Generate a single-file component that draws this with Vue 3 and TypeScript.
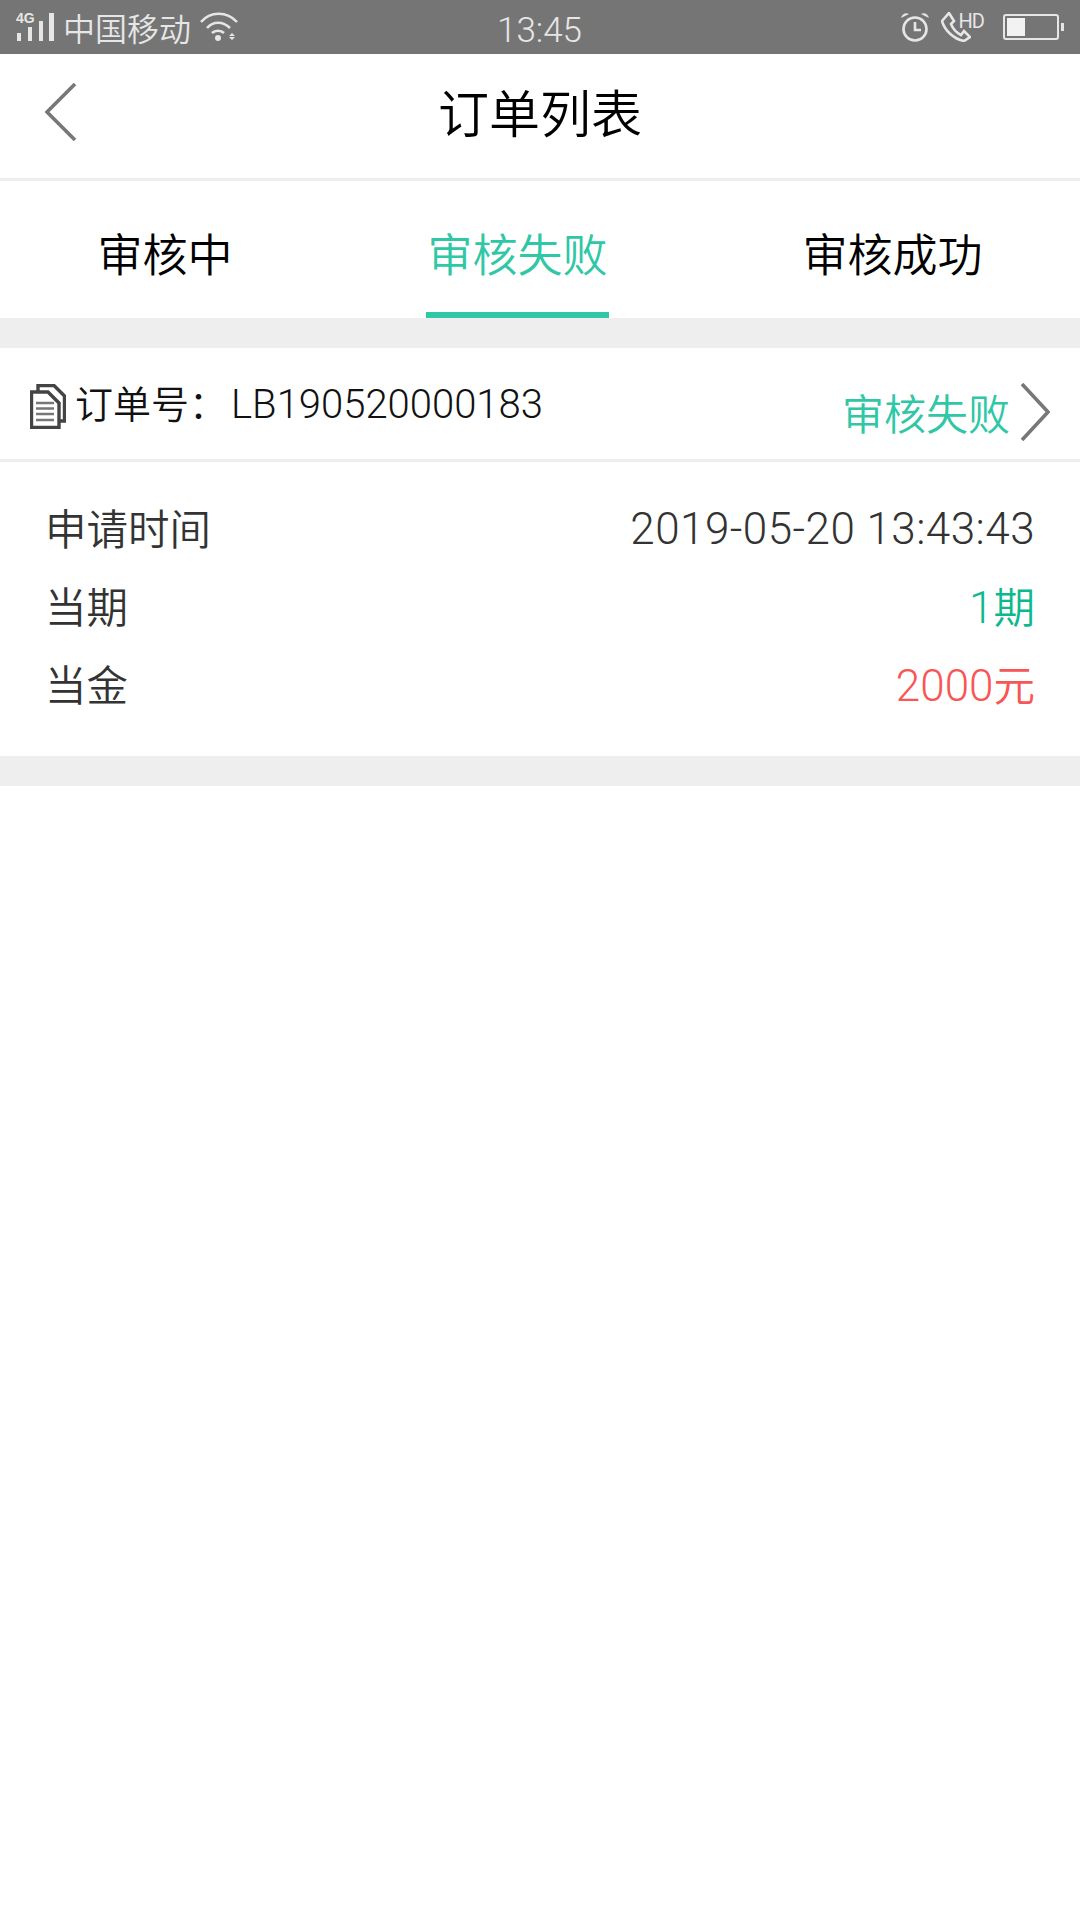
<template>
  <div class="page">
    <div class="status-bar">
      <div class="status-left">
        <svg class="signal" width="40" height="34" viewBox="0 0 40 34">
          <text x="0" y="13" class="net">4G</text>
          <rect x="1" y="23" width="4" height="8" />
          <rect x="12" y="17" width="4" height="14" />
          <rect x="23" y="11" width="4" height="20" />
          <rect x="33" y="3" width="5" height="28" />
        </svg>
        <span class="carrier">中国移动</span>
        <svg class="wifi" width="38" height="30" viewBox="0 0 38 30">
          <path d="M1 10 C10 -1 27 -1 37 10" />
          <path d="M7 16 C13 9 23 9 30 16" />
          <path d="M12 21 C15 18 21 18 24 21" />
          <circle cx="18" cy="26" r="3" class="solid" />
          <path d="M29 24 h6 l-3 -3 z M29 25 h6 l-3 3 z" class="solid" />
        </svg>
      </div>
      <span class="clock">13:45</span>
      <div class="status-right">
        <svg class="alarm" width="28" height="30" viewBox="0 0 28 30">
          <circle cx="14" cy="17" r="11.5" />
          <path d="M14 10 V18 H20" />
          <path d="M0 6 C1 2 5 0 8 2 Z M28 6 C27 2 23 0 20 2 Z" class="solid" />
        </svg>
        <div class="call">
          <svg width="30" height="30" viewBox="0 0 30 30">
            <path d="M1 9 L8 1 L13 9 L10 12 C12 17 16 21 20 23 L23 19 L29 25 L23 29 C13 27 4 19 1 9 Z" />
          </svg>
          <span class="hd">HD</span>
        </div>
        <div class="battery">
          <div class="battery-body"><div class="battery-fill"></div></div>
          <div class="battery-cap"></div>
        </div>
      </div>
    </div>

    <div class="nav">
      <svg class="back" width="32" height="58" viewBox="0 0 32 58">
        <path d="M30 1 L2 29 L30 57" />
      </svg>
      <h1>订单列表</h1>
    </div>

    <div class="tabs">
      <div
        v-for="tab in tabs"
        :key="tab"
        class="tab"
        :class="{ active: tab === current }"
      >
        {{ tab }}
      </div>
    </div>

    <div class="gap"></div>

    <div class="order">
      <div class="order-head">
        <div class="order-no">
          <svg class="doc" width="36" height="45" viewBox="0 0 36 45">
            <path d="M8 7 V1.5 H24 L34.5 12 V37 H30" class="back-sheet" />
            <path d="M1.5 8 H18 L29 19 V43.5 H1.5 Z" class="sheet" />
            <path d="M6 19 H24 M6 24.5 H24 M6 30 H24 M6 36 H24" class="lines" />
          </svg>
          <span>订单号：<span class="num order-num">LB190520000183</span></span>
        </div>
        <div class="order-status">
          <span>审核失败</span>
          <svg width="30" height="58" viewBox="0 0 30 58">
            <path d="M2 1 L28 29 L2 57" />
          </svg>
        </div>
      </div>
      <div class="order-body">
        <div class="row">
          <span>申请时间</span>
          <span class="num date">2019-05-20 13:43:43</span>
        </div>
        <div class="row">
          <span>当期</span>
          <span class="green"><span class="num">1</span>期</span>
        </div>
        <div class="row">
          <span>当金</span>
          <span class="red"><span class="num">2000</span>元</span>
        </div>
      </div>
    </div>

    <div class="gap"></div>
  </div>
</template>

<script setup lang="ts">
const tabs: string[] = ['审核中', '审核失败', '审核成功'];
const current = '审核失败';
</script>

<style>
body {
  margin: 0;
  background: #fff;
}
</style>

<style scoped>
.page {
  width: 1080px;
  height: 1920px;
  background: #fff;
  font-family: 'Noto Sans CJK SC', 'Noto Sans', sans-serif;
  font-weight: 350;
  overflow: hidden;
}

.num {
  font-family: Roboto, 'Noto Sans CJK SC', sans-serif;
  font-weight: 300;
  font-size: 44px;
}

.order-num {
  margin-left: 4px;
  font-size: 40px;
}

.date {
  padding-top: 2px;
  letter-spacing: 0.45px;
}

.status-bar {
  position: relative;
  display: flex;
  align-items: center;
  justify-content: space-between;
  height: 54px;
  padding: 0 16px;
  box-sizing: border-box;
  background: #757575;
  color: #e6e6e6;
}

.status-left,
.status-right {
  display: flex;
  align-items: center;
}

.signal rect {
  fill: #e6e6e6;
}

.net {
  font-family: 'Liberation Sans', sans-serif;
  font-size: 14px;
  font-weight: 700;
  fill: #e6e6e6;
}

.carrier {
  margin-left: 7px;
  font-size: 32px;
  line-height: 54px;
}

.wifi {
  margin-left: 9px;
}

.wifi path,
.alarm circle,
.alarm path,
.call path {
  fill: none;
  stroke: #e6e6e6;
  stroke-width: 2.6;
}

.status-bar .solid {
  fill: #e6e6e6;
  stroke: none;
}

.clock {
  position: absolute;
  left: 497px;
  top: 1px;
  font-family: Roboto, sans-serif;
  font-size: 35px;
  font-weight: 300;
  line-height: 60px;
}

.call {
  display: flex;
  align-items: flex-start;
  margin-left: 12px;
}

.hd {
  margin-left: -12px;
  font-family: Roboto, sans-serif;
  font-size: 20px;
  font-weight: 400;
  letter-spacing: -1px;
  line-height: 18px;
}

.battery {
  display: flex;
  align-items: center;
  margin-left: 19px;
}

.battery-body {
  width: 56px;
  height: 26px;
  padding: 2px;
  box-sizing: border-box;
  border: 2px solid #e6e6e6;
  border-radius: 3px;
}

.battery-fill {
  width: 18px;
  height: 100%;
  background: #f2f2f2;
}

.battery-cap {
  width: 3px;
  height: 8px;
  margin-left: 2px;
  background: #e6e6e6;
}

.nav {
  position: relative;
  display: flex;
  align-items: center;
  justify-content: center;
  height: 114px;
  padding-bottom: 10px;
  border-bottom: 3px solid #eee;
}

.back {
  position: absolute;
  left: 45px;
  top: 29px;
}

.back path,
.order-status path {
  fill: none;
  stroke: #777;
  stroke-width: 3.6;
}

h1 {
  margin: 0;
  font-size: 51px;
  font-weight: 350;
  color: #000;
}

.tabs {
  display: flex;
  justify-content: space-around;
  height: 137px;
}

.tab {
  box-sizing: border-box;
  height: 137px;
  padding-top: 40px;
  font-size: 45px;
  line-height: 64px;
  color: #000;
}

.tab.active {
  position: relative;
  color: #2fc7a5;
}

.tab.active::after {
  content: '';
  position: absolute;
  left: -1.5px;
  right: -1.5px;
  bottom: 0;
  height: 6px;
  background: #2fc7a5;
}

.gap {
  height: 30px;
  background: #eee;
}

.order-head {
  display: flex;
  justify-content: space-between;
  height: 111px;
  border-bottom: 3px solid #eee;
}

.order-no {
  display: flex;
  align-items: flex-start;
  padding: 24px 0 0 30px;
  font-size: 38px;
  line-height: 60px;
  color: #111;
}

.doc {
  margin: 12px 9px 0 0;
}

.doc .back-sheet,
.doc .sheet {
  fill: #fff;
  stroke: #444;
  stroke-width: 3.4;
}

.doc .lines {
  stroke: #777;
  stroke-width: 2.6;
}

.order-status {
  display: flex;
  align-items: center;
  padding: 16px 30px 0 0;
  font-size: 42px;
  color: #2fc7a5;
}

.order-status svg {
  margin-left: 10px;
}

.order-body {
  display: flex;
  flex-direction: column;
  height: 294px;
  padding: 26px 45px 0 45px;
  box-sizing: border-box;
}

.row {
  display: flex;
  justify-content: space-between;
  height: 78px;
  font-size: 41.5px;
  line-height: 78px;
  color: #333;
}

.green {
  color: #0db88f;
}

.red {
  color: #fa5555;
}
</style>
